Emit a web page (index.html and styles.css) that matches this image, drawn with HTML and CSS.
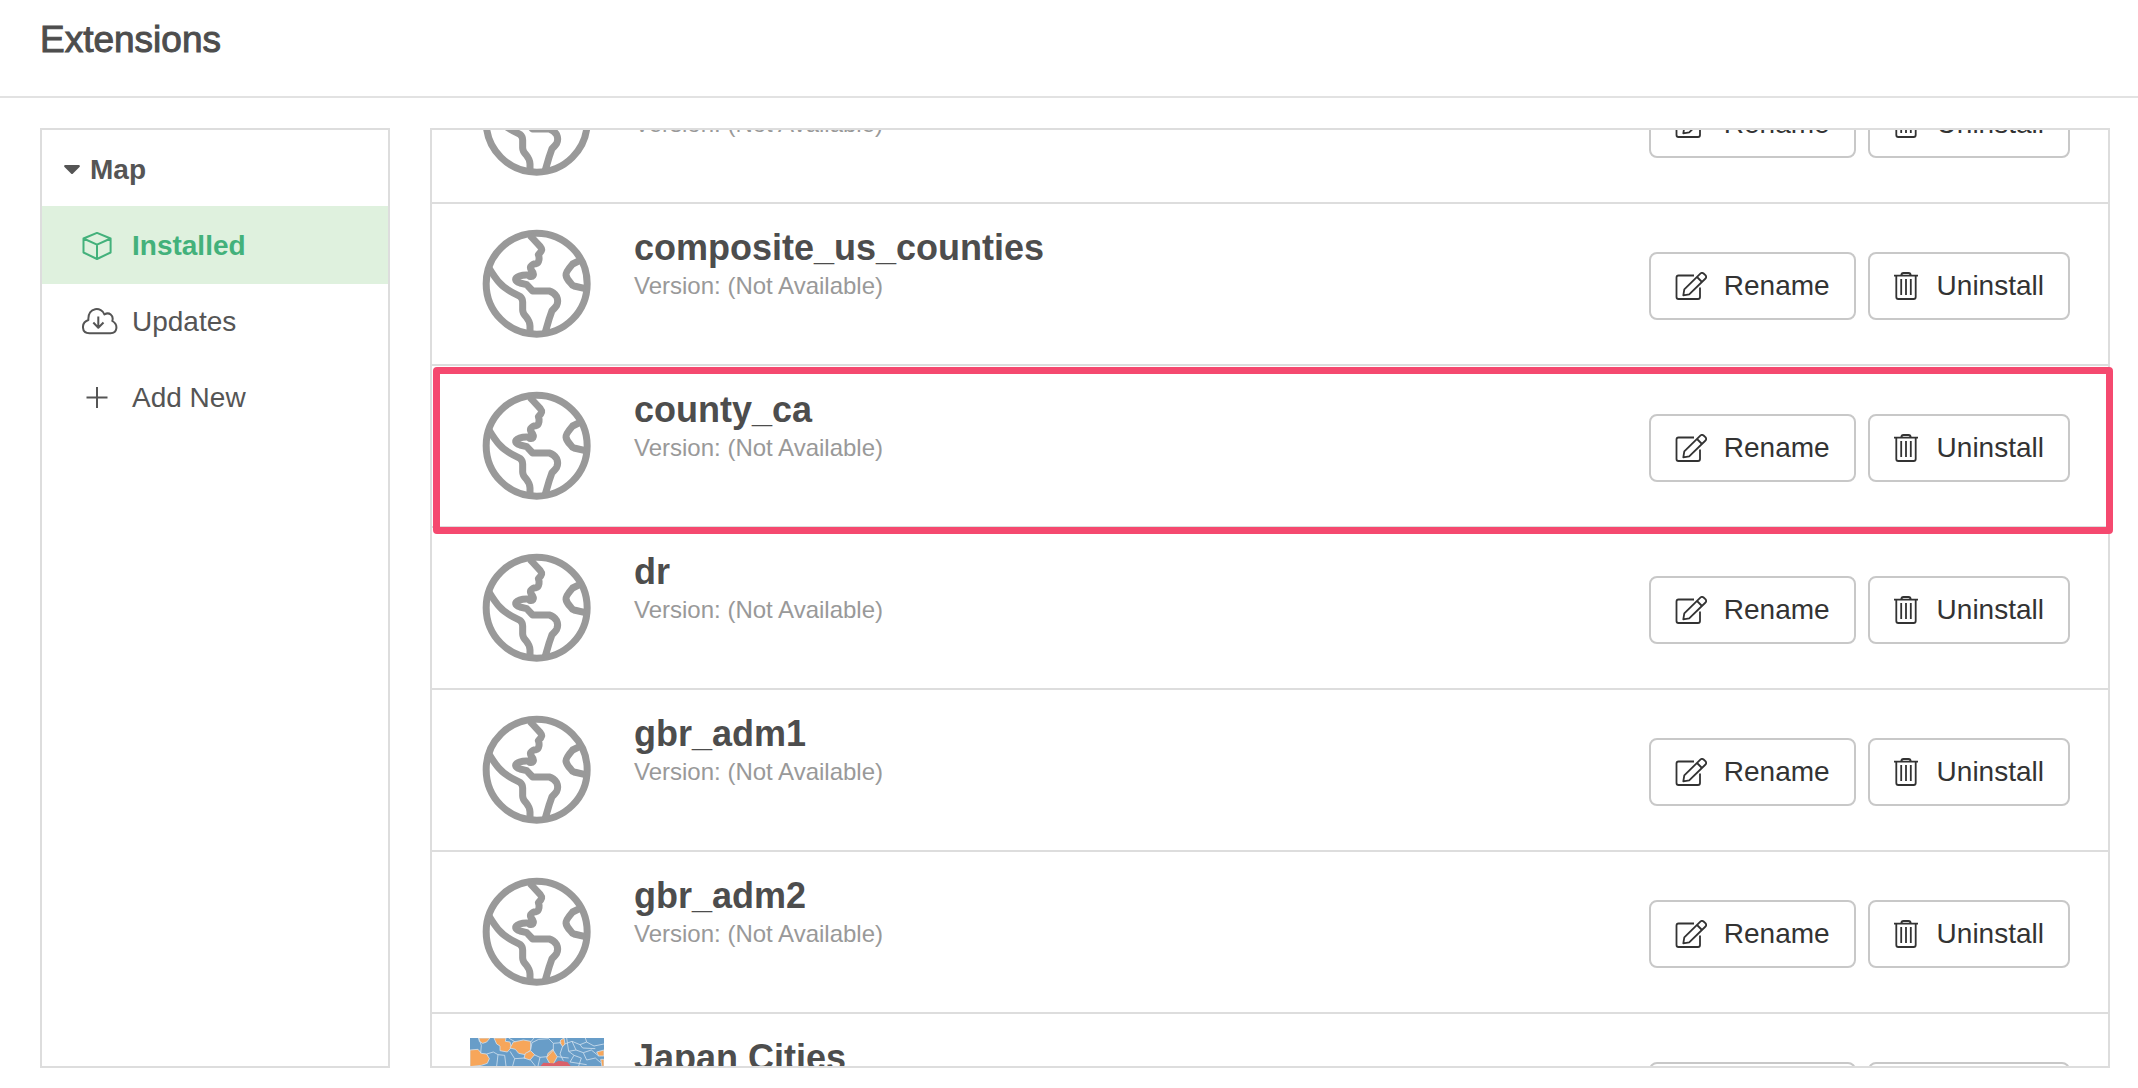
FILE: index.html
```
<!DOCTYPE html>
<html lang="en">
<head>
  <meta charset="UTF-8">
  <title>Extensions</title>
  <link rel="stylesheet" href="styles.css">
</head>
<body>
  <!-- shared icons -->
  <svg class="icon-defs" aria-hidden="true">
    <symbol id="icon-globe" viewBox="0 24 402 336">
      <g fill="none" stroke="currentColor" stroke-width="21" stroke-linejoin="round">
        <circle cx="200" cy="191" r="151.5"/>
        <path d="M180 46L187 54L211 80Q216 86 215 90Q214 95 205 104Q208 111 207 119Q205 130 199 131Q188 130 182 140Q180 145 184 150Q193 161 189 167Q186 171 179 169L174 165Q160 164 149 168Q136 173 137 179Q138 185 150 189L170 194L188 213L238 213Q251 216 260 230Q266 243 260 256Q258 260 246 272L238 295L224 343"/>
        <path d="M57 144C68 162 78 178 90 190C106 209 132 220 150 229Q158 235 158 246L158 270Q158 280 168 290Q180 305 180 318L180 343"/>
        <path d="M330 121L308 132Q287 156 288 165Q289 175 301 188Q306 196 312 198L346 206"/>
      </g>
    </symbol>
    <symbol id="icon-rename" viewBox="0 0 32 28">
      <g fill="none" stroke="currentColor" stroke-width="1.8" stroke-linejoin="round">
        <path d="M19 3.5H3.5Q1.5 3.5 1.5 5.5V25Q1.5 27 3.5 27H23Q25 27 25 25V15.5"/>
        <path d="M8.3 23.4L9.3 17.4L25.6 1.4Q27 .3 28.6 1.5L30.6 3.4Q31.8 5 30.5 6.5L14.2 22.4Z"/>
        <path d="M22 5L27 10"/>
      </g>
    </symbol>
    <symbol id="icon-trash" viewBox="0 0 26 28">
      <g fill="none" stroke="currentColor" stroke-width="1.8">
        <path d="M0 3.6H24M7.2 3.6Q7.4 1 9.5 1H14.5Q16.6 1 16.8 3.6"/>
        <path d="M2.3 3.6V25Q2.3 27 4.3 27H19.7Q21.7 27 21.7 25V3.6"/>
        <path d="M7.2 7V23M12 7V23M16.800 7V23"/>
      </g>
    </symbol>
  </svg>

  <header class="header">
    <h1>Extensions</h1>
  </header>

  <main class="main">
    <nav class="sidebar">
      <h2 class="group">
        <svg class="caret" viewBox="0 0 16 10"><path d="M1 0H15Q16.500 .5 15.500 2L9 8.500Q8 9.500 7 8.500L.5 2Q-.5 .5 1 0Z"/></svg>
        Map
      </h2>
      <a class="item active" href="#installed">
        <svg viewBox="0 0 36 28"><path d="M15 .9L28.600 6.500V20.500L15 27L1.500 20.500V6.500ZM1.500 6.500L15 12.700L28.600 6.500M15 12.700V27"/></svg>
        Installed
      </a>
      <a class="item" href="#updates">
        <svg viewBox="0 0 36 28"><path d="M7.500 25.300C-1 25-1 14.500 6.400 12C5.500-1.500 20-1.500 22.400 6.500C27 3.500 32 7.500 30.300 13C36.500 16.500 35.500 25 28.500 25.300ZM16.300 8.500V19.800M11.300 14.500L16.300 19.800L21.500 14.500"/></svg>
        Updates
      </a>
      <a class="item" href="#add">
        <svg viewBox="0 0 36 28"><path d="M15 3V24M4.500 13.500H25.500"/></svg>
        Add New
      </a>
    </nav>

    <section class="content">
      <div class="list" id="extensions">
        <article class="extension">
          <svg class="thumb"><use href="#icon-globe"/></svg>
          <div class="info">
            <h3>composite_uk</h3>
            <p>Version: (Not Available)</p>
          </div>
          <div class="actions">
            <button type="button"><svg width="32" height="28"><use href="#icon-rename"/></svg>Rename</button>
            <button type="button"><svg width="26" height="28"><use href="#icon-trash"/></svg>Uninstall</button>
          </div>
        </article>
        <article class="extension">
          <svg class="thumb"><use href="#icon-globe"/></svg>
          <div class="info">
            <h3>composite_us_counties</h3>
            <p>Version: (Not Available)</p>
          </div>
          <div class="actions">
            <button type="button"><svg width="32" height="28"><use href="#icon-rename"/></svg>Rename</button>
            <button type="button"><svg width="26" height="28"><use href="#icon-trash"/></svg>Uninstall</button>
          </div>
        </article>
        <article class="extension">
          <svg class="thumb"><use href="#icon-globe"/></svg>
          <div class="info">
            <h3>county_ca</h3>
            <p>Version: (Not Available)</p>
          </div>
          <div class="actions">
            <button type="button"><svg width="32" height="28"><use href="#icon-rename"/></svg>Rename</button>
            <button type="button"><svg width="26" height="28"><use href="#icon-trash"/></svg>Uninstall</button>
          </div>
        </article>
        <article class="extension">
          <svg class="thumb"><use href="#icon-globe"/></svg>
          <div class="info">
            <h3>dr</h3>
            <p>Version: (Not Available)</p>
          </div>
          <div class="actions">
            <button type="button"><svg width="32" height="28"><use href="#icon-rename"/></svg>Rename</button>
            <button type="button"><svg width="26" height="28"><use href="#icon-trash"/></svg>Uninstall</button>
          </div>
        </article>
        <article class="extension">
          <svg class="thumb"><use href="#icon-globe"/></svg>
          <div class="info">
            <h3>gbr_adm1</h3>
            <p>Version: (Not Available)</p>
          </div>
          <div class="actions">
            <button type="button"><svg width="32" height="28"><use href="#icon-rename"/></svg>Rename</button>
            <button type="button"><svg width="26" height="28"><use href="#icon-trash"/></svg>Uninstall</button>
          </div>
        </article>
        <article class="extension">
          <svg class="thumb"><use href="#icon-globe"/></svg>
          <div class="info">
            <h3>gbr_adm2</h3>
            <p>Version: (Not Available)</p>
          </div>
          <div class="actions">
            <button type="button"><svg width="32" height="28"><use href="#icon-rename"/></svg>Rename</button>
            <button type="button"><svg width="26" height="28"><use href="#icon-trash"/></svg>Uninstall</button>
          </div>
        </article>
        <article class="extension">
          <svg class="thumb" viewBox="0 0 402 336">
            <rect width="402" height="336" fill="#689dc8"/>
            <g fill="#f7a65a" stroke="#cfe0ee" stroke-width="2.500">
              <path d="M0 36L24 34L34 46L50 48L58 62L52 76L34 82L0 86Z"/>
              <path d="M26 0H60L50 12L38 16L28 10Z"/>
              <path d="M72 0H108L106 10L120 12L124 28L112 42L90 38V24L80 18Z"/>
              <path d="M130 12L160 6L182 10V36L166 50L146 46L136 34L120 30Z"/>
              <path d="M166 46L182 38L194 50L180 66L162 60Z"/>
              <path d="M272 6L282 0L285 18L278 26L270 14Z"/>
              <path d="M234 46L248 34L262 56L250 78L240 78L230 60Z"/>
              <path d="M380 42L402 36V54H386Z"/>
              <path d="M392 64H402V86H396Z"/>
            </g>
            <path d="M212 84L220 74L252 76L266 68L292 72L302 84V120H212Z" fill="#d9606a"/>
            <g fill="none" stroke="#cfe0ee" stroke-width="2.500">
              <path d="M26 0L34 22L32 46M50 48L70 42L84 50L104 52L108 84M84 50L80 84M120 40L134 62L128 84M134 62L166 60M182 34L186 14L206 4L236 2L250 16V36L232 56L210 58L192 50M180 64L196 84M210 58L204 84M250 16L274 14M278 24L270 48L280 68M284 18L306 10L330 20L350 12L372 24L402 18M290 0L296 40L312 52L300 72M306 10L318 36L340 44L350 66M318 36L296 40M340 44L364 36L386 54M350 12L346 0M330 20L338 30L376 32M312 52L334 60L326 84M350 66L376 60L392 74M262 56L296 60M116 0L136 12M182 12L192 0M300 72L350 80"/>
            </g>
          </svg>
          <div class="info">
            <h3>Japan Cities</h3>
            <p>Version: (Not Available)</p>
          </div>
          <div class="actions">
            <button type="button"><svg width="32" height="28"><use href="#icon-rename"/></svg>Rename</button>
            <button type="button"><svg width="26" height="28"><use href="#icon-trash"/></svg>Uninstall</button>
          </div>
        </article>
      </div>
      <div class="highlight"></div>
    </section>
  </main>

  <script>
    // start part way down the list
    document.getElementById("extensions").scrollTop = 88;
  </script>
</body>
</html>
```
FILE: styles.css
```
* { box-sizing: border-box; }
body {
  display: flex;
  flex-direction: column;
  height: 100vh;
  margin: 0;
  background: #fff;
  color: #555;
  font-family: "Liberation Sans", Arial, sans-serif;
  font-size: 28px;
}
h1, h2, h3, p { margin: 0; }
.icon-defs { position: absolute; width: 0; height: 0; }

.header { padding: 20px 40px 36px; border-bottom: 2px solid #e2e2e2; }
.header h1 {
  color: #4d4d4d;
  font-size: 37px;
  font-weight: normal;
  line-height: 40px;
  -webkit-text-stroke: 1px #4d4d4d;
}

.main { display: flex; flex: 1; gap: 40px; min-height: 0; padding: 30px 28px 20px 40px; }

.sidebar { flex: none; width: 350px; border: 2px solid #ddd; }
.group, .item { display: flex; align-items: center; height: 76px; padding-top: 4px; font-size: 28px; line-height: 32px; }
.group { gap: 10px; padding-left: 22px; }
.caret { width: 16px; height: 10px; fill: #555; }
.item { gap: 14px; padding-left: 40px; color: #555; text-decoration: none; }
.item svg { width: 36px; height: 28px; fill: none; stroke: currentColor; stroke-width: 2; stroke-linejoin: round; }
.item.active {
  height: 78px;
  margin-bottom: -2px;
  padding-bottom: 2px;
  background: #dff1de;
  color: #43b17b;
  font-weight: bold;
}

.content { position: relative; flex: 1; min-width: 0; }
.list { height: 100%; overflow-y: auto; border: 2px solid #ddd; scrollbar-width: none; }
.extension { display: flex; align-items: flex-start; padding: 24px 38px; border-bottom: 2px solid #ddd; }
.thumb { flex: none; width: 134px; height: 112px; margin-right: 30px; color: #999; }
.info { flex: 1; }
.info h3 { color: #4d4d4d; font-size: 36px; line-height: 40px; }
.info p { margin-top: 2px; color: #999; font-size: 24px; line-height: 32px; }

.actions { display: flex; gap: 12px; margin-top: 24px; }
.actions button {
  display: flex;
  align-items: center;
  gap: 17px;
  height: 68px;
  padding: 0 24px;
  border: 2px solid #c8c8c8;
  border-radius: 8px;
  background: #fff;
  color: #333;
  font: inherit;
}

/* frame round the selected extension */
.highlight {
  position: absolute;
  top: 239px;
  right: -3px;
  left: 3px;
  height: 167px;
  border: 7px solid #f5496f;
  border-radius: 4px;
}
```
